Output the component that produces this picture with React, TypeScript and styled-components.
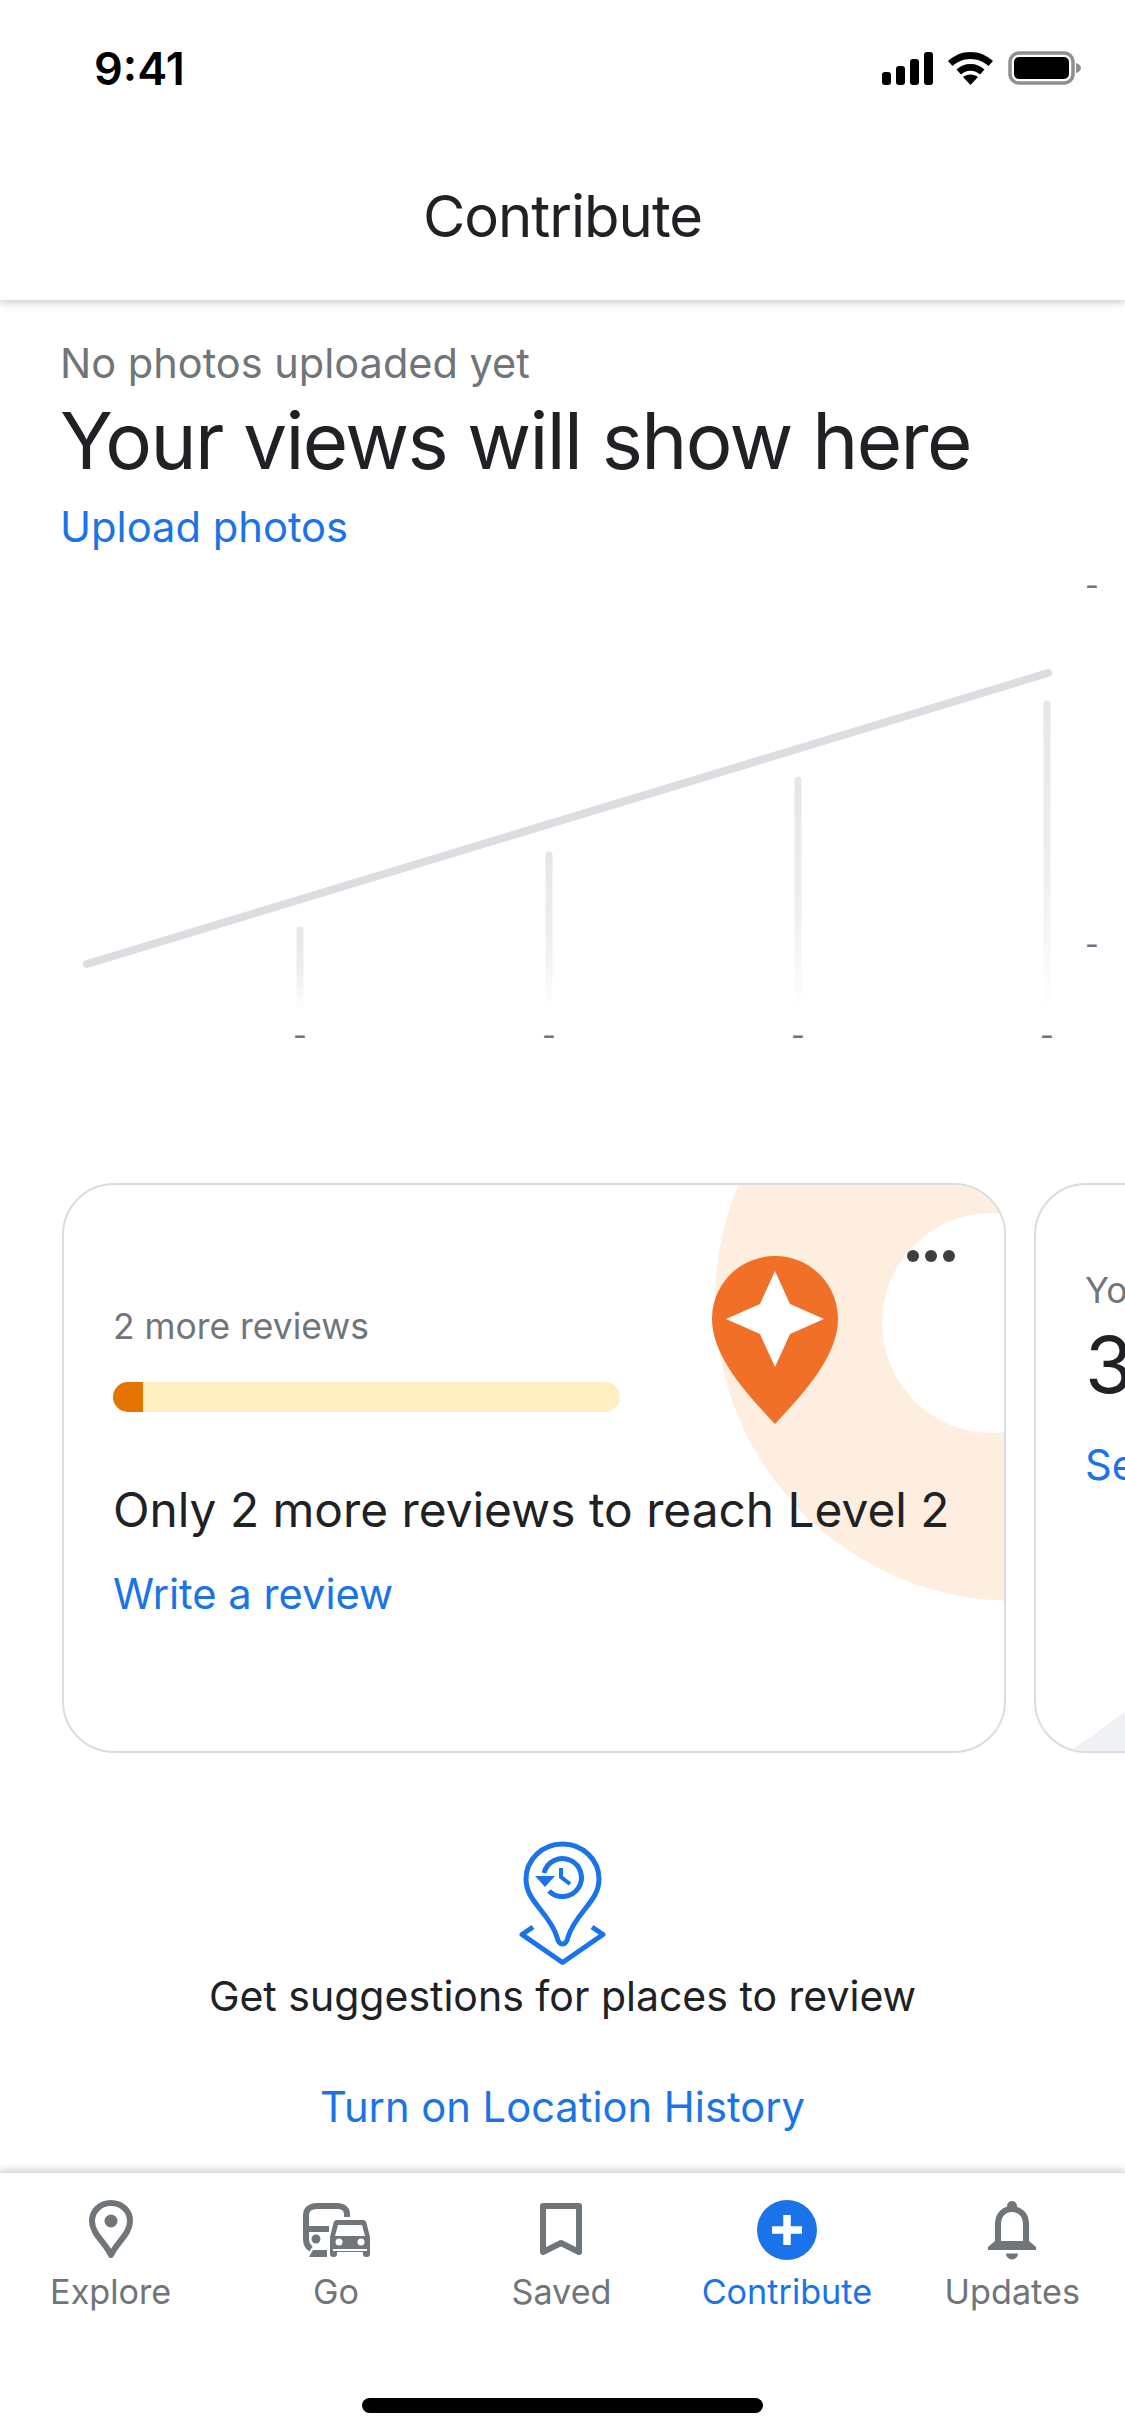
import React from 'react';
import styled, { createGlobalStyle } from 'styled-components';

const GlobalStyle = createGlobalStyle`
  html, body {
    margin: 0;
    padding: 0;
    background: #fff;
  }
  * {
    box-sizing: border-box;
  }
`;

const Screen = styled.div`
  width: 1125px;
  height: 2436px;
  display: flex;
  flex-direction: column;
  overflow: hidden;
  background: #fff;
  color: #202124;
  font-family: Inter, Roboto, sans-serif;
`;

const StatusBar = styled.div`
  position: relative;
  z-index: 3;
  height: 136px;
  flex: none;
  display: flex;
  align-items: center;
  justify-content: space-between;
  padding: 0 44px 0 94px;
  background: #fff;
`;

const Clock = styled.span`
  font-size: 45px;
  font-weight: 600;
  color: #000;
`;

const StatusIcons = styled.div`
  display: flex;
  align-items: center;
  gap: 15px;
`;

const Header = styled.header`
  position: relative;
  z-index: 2;
  height: 164px;
  flex: none;
  display: flex;
  align-items: center;
  justify-content: center;
  padding-bottom: 4px;
  background: #fff;
  box-shadow: 0 2px 8px rgba(60, 64, 67, 0.3);
`;

const Title = styled.h1`
  margin: 0;
  font-size: 58px;
  font-weight: 400;
  letter-spacing: -1px;
`;

const Main = styled.main`
  flex: 1;
  min-height: 0;
  overflow: hidden;
`;

const Summary = styled.section`
  padding: 38px 60px 0;
`;

const Caption = styled.div`
  font-size: 41.5px;
  line-height: 50px;
  color: #70757a;
`;

const Headline = styled.div`
  margin-top: 3px;
  font-size: 78px;
  line-height: 100px;
  letter-spacing: -1.6px;
`;

const LinkText = styled.div<{ $top?: number }>`
  margin-top: ${props => props.$top ?? 0}px;
  font-size: 41.7px;
  line-height: 50px;
  color: #1a73e8;
`;

const ChartSvg = styled.svg`
  display: block;
  margin-top: 8px;
`;

const CardRow = styled.div`
  display: flex;
  gap: 28px;
  margin-top: 123px;
  padding-left: 62px;
`;

const Card = styled.article`
  position: relative;
  flex: none;
  width: 944px;
  height: 570px;
  overflow: hidden;
  border: 2px solid #dadce0;
  border-radius: 52px;
  background: #fff;
`;

const PeachCircle = styled.div`
  position: absolute;
  left: 651px;
  top: -184px;
  width: 600px;
  height: 600px;
  border-radius: 50%;
  background: #feeee0;
`;

const WhiteCircle = styled.div`
  position: absolute;
  left: 818px;
  top: 28px;
  width: 220px;
  height: 220px;
  border-radius: 50%;
  background: #fff;
`;

const BadgePin = styled.svg`
  position: absolute;
  left: 648px;
  top: 71px;
`;

const MoreDots = styled.div`
  position: absolute;
  left: 843px;
  top: 65px;
  display: flex;
  gap: 6px;
`;

const Dot = styled.span`
  width: 12px;
  height: 12px;
  border-radius: 50%;
  background: #3c4043;
`;

const CardBody = styled.div<{ $top: number }>`
  position: relative;
  padding: ${props => props.$top}px 0 0 49px;
  white-space: nowrap;
`;

const CardLabel = styled.div`
  font-size: 35.4px;
  line-height: 44px;
  color: #70757a;
`;

const ProgressTrack = styled.div`
  width: 507px;
  height: 30px;
  margin-top: 33px;
  overflow: hidden;
  border-radius: 15px;
  background: #feefc3;
`;

const ProgressFill = styled.div`
  height: 100%;
  background: #e37400;
`;

const CardMessage = styled.div`
  margin-top: 68px;
  font-size: 47.8px;
  line-height: 60px;
`;

const CardValue = styled.div`
  margin-top: 7px;
  font-size: 78px;
  line-height: 90px;
`;

const CornerShape = styled.div`
  position: absolute;
  left: 0;
  bottom: 0;
  width: 400px;
  height: 260px;
  background: #eff1f5;
  clip-path: polygon(34px 100%, 400px 0, 400px 100%);
`;

const Suggestions = styled.section`
  display: flex;
  flex-direction: column;
  align-items: center;
  margin-top: 88px;
`;

const SuggestionText = styled.div`
  margin-top: 5px;
  font-size: 41px;
  line-height: 50px;
`;

const BottomNav = styled.nav`
  position: relative;
  z-index: 2;
  height: 264px;
  flex: none;
  display: flex;
  flex-direction: column;
  padding-top: 27px;
  border-top: 1px solid #dadce0;
  background: #fff;
  box-shadow: 0 -2px 8px rgba(60, 64, 67, 0.25);
`;

const Tabs = styled.div`
  display: grid;
  grid-template-columns: repeat(5, 1fr);
  margin-left: -2px;
`;

const Tab = styled.div<{ $active?: boolean }>`
  display: flex;
  flex-direction: column;
  align-items: center;
  color: ${props => (props.$active ? '#1a73e8' : '#70757a')};
`;

const TabIcon = styled.div`
  height: 60px;
  display: flex;
  align-items: center;
  justify-content: center;
`;

const TabLabel = styled.span`
  margin-top: 12px;
  font-size: 34.2px;
  line-height: 40px;
`;

const HomeBar = styled.div`
  align-self: center;
  width: 401px;
  height: 15px;
  margin-top: 86px;
  border-radius: 8px;
  background: #000;
`;

const barXs = [300, 549, 798, 1047];
const barTops = [927, 852, 777, 701];

function ViewsChart() {
  return (
    <ChartSvg width="1125" height="500" viewBox="0 560 1125 500">
      <defs>
        <linearGradient id="barFade" x1="0" y1="0" x2="0" y2="1">
          <stop offset="0" stopColor="#e5e6e9" />
          <stop offset="0.55" stopColor="#eeeff1" />
          <stop offset="1" stopColor="#ffffff" />
        </linearGradient>
      </defs>
      <line x1="87" y1="964" x2="1048" y2="673" stroke="#dcdde1" strokeWidth="8" strokeLinecap="round" />
      {barXs.map((x, i) => (
        <path key={x} d={`M${x - 3.5} 1012 V${barTops[i] + 3} a3.5 3.5 0 0 1 7 0 V1012 Z`} fill="url(#barFade)" />
      ))}
      {barXs.map(x => (
        <text key={x} x={x} y="1046" textAnchor="middle" fontSize="30" fill="#70757a">
          -
        </text>
      ))}
      <text x="1092" y="596" textAnchor="middle" fontSize="30" fill="#70757a">
        -
      </text>
      <text x="1092" y="955" textAnchor="middle" fontSize="30" fill="#70757a">
        -
      </text>
    </ChartSvg>
  );
}

function StatusGlyphs() {
  return (
    <StatusIcons>
      <svg width="51" height="33" viewBox="0 0 51 33" fill="#000">
        <rect x="0" y="20" width="9" height="13" rx="3" />
        <rect x="14" y="14" width="9" height="19" rx="3" />
        <rect x="28" y="7" width="9" height="26" rx="3" />
        <rect x="42" y="0" width="9" height="33" rx="3" />
      </svg>
      <svg width="45" height="33" viewBox="0 0 45 33" fill="#000">
        <path d="M22.5 0C14 0 6.300 3.300 0 9l4.500 5C9 9.800 15.500 7 22.500 7s13.500 2.800 18 7l4.500-5C38.700 3.300 31 0 22.500 0z" />
        <path d="M22.500 12c-5.500 0-10.300 2-14 5.500l4.500 5c2.500-2.300 5.800-3.700 9.500-3.700s7 1.400 9.500 3.700l4.500-5C32.800 14 28 12 22.500 12z" />
        <path d="M22.500 33l7.500-8c-2-1.700-4.600-2.600-7.500-2.600s-5.500.9-7.500 2.600z" />
      </svg>
      <svg width="73" height="34" viewBox="0 0 73 34">
        <rect x="2" y="2" width="63" height="30" rx="9" fill="none" stroke="#8f8f8f" strokeWidth="3.500" />
        <rect x="6" y="6" width="55" height="22" rx="5" fill="#000" />
        <path d="M68 12c3 .8 5 2.800 5 5s-2 4.200-5 5z" fill="#8f8f8f" />
      </svg>
    </StatusIcons>
  );
}

function LevelPin() {
  return (
    <BadgePin width="126" height="168" viewBox="0 0 126 168">
      <path d="M63 0C28 0 0 28 0 63c0 38 36 76 63 105 27-29 63-67 63-105C126 28 98 0 63 0z" fill="#ef7026" />
      <path d="M63 15l15 33 34 15-34 15-15 33-15-33-34-15 34-15z" fill="#fff" />
    </BadgePin>
  );
}

function HistoryPin() {
  return (
    <svg width="89" height="125" viewBox="-2 0 89 125" fill="none" stroke="#1a73e8" strokeWidth="5">
      <path d="M42.500 3C22 3 6 19 6 38c0 12 6 20 14 30s14 18 17 28c1 5 3 7 5.500 7s4.500-2 5.500-7c3-10 9-18 17-28s14-18 14-30C79 19 63 3 42.500 3z" />
      <path d="M13 86L2 93.500l40.500 28 40.500-28L72 86" strokeLinejoin="round" />
      <path d="M24 32A19 19 0 1 1 29 50" />
      <path d="M41 27v9l9 7" strokeWidth="4" />
      <path d="M15 35h20l-10 11z" fill="#1a73e8" stroke="none" />
    </svg>
  );
}

function ExploreIcon() {
  return (
    <svg width="44" height="60" viewBox="0 0 44 60" fill="none" stroke="currentColor" strokeWidth="6">
      <path d="M22 3C11 3 3 11 3 21c0 13 13 21 19 34 6-13 19-21 19-34C41 11 33 3 22 3z" strokeLinejoin="round" />
      <circle cx="22" cy="21" r="6.500" fill="currentColor" stroke="none" />
    </svg>
  );
}

function GoIcon() {
  return (
    <svg width="67" height="55" viewBox="0 0 67 55" fill="currentColor">
      <path d="M44 14v-3c0-5-4-8-10-8H14C7 3 3 7 3 12v24c0 5 2 8 5 10" fill="none" stroke="currentColor" strokeWidth="6" />
      <rect x="3" y="23" width="23" height="6" />
      <circle cx="13" cy="36" r="4.500" />
      <path d="M6 54l4-7h14v7z" />
      <path d="M34 17h26c2 0 3 1 3.500 3L67 34v17c0 2-1 3-3 3h-1c-2 0-3-1-3-3v-2H34v2c0 2-1 3-3 3h-1c-2 0-3-1-3-3V34l3.500-14c.5-2 1.500-3 3.500-3z" />
      <path d="M35 22h24l3 11H32z" fill="#fff" />
      <circle cx="36" cy="39" r="3.500" fill="#fff" />
      <circle cx="58" cy="39" r="3.500" fill="#fff" />
      <rect x="30" y="46" width="34" height="2" fill="#fff" />
    </svg>
  );
}

function SavedIcon() {
  return (
    <svg width="42" height="54" viewBox="0 0 42 54" fill="none" stroke="currentColor" strokeWidth="6">
      <path d="M3 3h36v46l-18-9-18 9z" strokeLinejoin="round" />
    </svg>
  );
}

function ContributeIcon() {
  return (
    <svg width="60" height="60" viewBox="0 0 60 60">
      <circle cx="30" cy="30" r="30" fill="#1a73e8" />
      <path d="M15 30h30M30 15v30" stroke="#fff" strokeWidth="7.500" />
    </svg>
  );
}

function UpdatesIcon() {
  return (
    <svg width="48" height="60" viewBox="0 0 48 60" fill="currentColor">
      <circle cx="24" cy="6" r="5" />
      <path d="M10 43V24c0-9 6-15 14-15s14 6 14 15v19" fill="none" stroke="currentColor" strokeWidth="6" />
      <path d="M0 50v-3l7-6h34l7 6v3z" />
      <path d="M18 53.500h12a6 6 0 0 1-12 0z" />
    </svg>
  );
}

export default function App() {
  return (
    <Screen>
      <GlobalStyle />
      <StatusBar>
        <Clock>9:41</Clock>
        <StatusGlyphs />
      </StatusBar>
      <Header>
        <Title>Contribute</Title>
      </Header>
      <Main>
        <Summary>
          <Caption>No photos uploaded yet</Caption>
          <Headline>Your views will show here</Headline>
          <LinkText $top={11}>Upload photos</LinkText>
        </Summary>
        <ViewsChart />
        <CardRow>
          <Card>
            <PeachCircle />
            <WhiteCircle />
            <LevelPin />
            <MoreDots>
              <Dot />
              <Dot />
              <Dot />
            </MoreDots>
            <CardBody $top={120}>
              <CardLabel>2 more reviews</CardLabel>
              <ProgressTrack>
                <ProgressFill style={{ width: `${(30 / 507) * 100}%` }} />
              </ProgressTrack>
              <CardMessage>Only 2 more reviews to reach Level 2</CardMessage>
              <LinkText $top={29}>Write a review</LinkText>
            </CardBody>
          </Card>
          <Card>
            <CornerShape />
            <CardBody $top={84}>
              <CardLabel>Your rating</CardLabel>
              <CardValue>3</CardValue>
              <LinkText $top={30}>See</LinkText>
            </CardBody>
          </Card>
        </CardRow>
        <Suggestions>
          <HistoryPin />
          <SuggestionText>Get suggestions for places to review</SuggestionText>
          <LinkText $top={61}>Turn on Location History</LinkText>
        </Suggestions>
      </Main>
      <BottomNav>
        <Tabs>
          <Tab>
            <TabIcon>
              <ExploreIcon />
            </TabIcon>
            <TabLabel>Explore</TabLabel>
          </Tab>
          <Tab>
            <TabIcon>
              <GoIcon />
            </TabIcon>
            <TabLabel>Go</TabLabel>
          </Tab>
          <Tab>
            <TabIcon>
              <SavedIcon />
            </TabIcon>
            <TabLabel>Saved</TabLabel>
          </Tab>
          <Tab $active>
            <TabIcon>
              <ContributeIcon />
            </TabIcon>
            <TabLabel>Contribute</TabLabel>
          </Tab>
          <Tab>
            <TabIcon>
              <UpdatesIcon />
            </TabIcon>
            <TabLabel>Updates</TabLabel>
          </Tab>
        </Tabs>
        <HomeBar />
      </BottomNav>
    </Screen>
  );
}
